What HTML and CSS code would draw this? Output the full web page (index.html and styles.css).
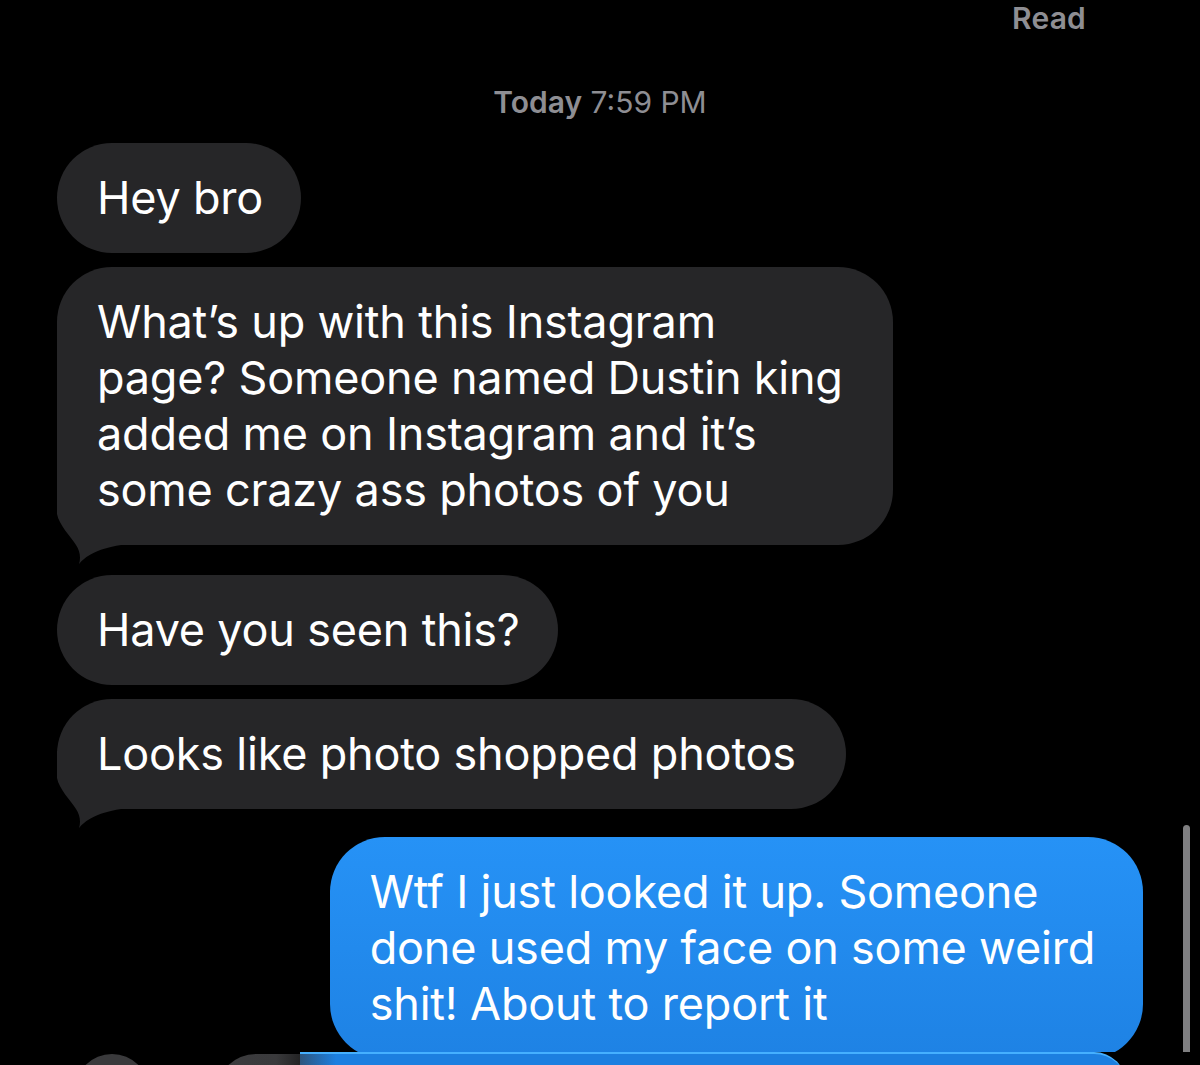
FILE: index.html
```html
<!DOCTYPE html>
<html>
<head>
<meta charset="utf-8">
<link rel="stylesheet" href="styles.css">
</head>
<body>
<div class="screen">
  <div class="read">Read</div>
  <div class="stamp"><span class="day">Today</span> 7:59 PM</div>
  <div class="thread">
    <div class="msg in">Hey bro</div>
    <div class="msg in tail">
      <svg class="tail-l" width="64" height="80" viewBox="0 -58 64 80"><path d="M0,-58 L0,-31 C2,-20 14,-8 19,0 C23,6 24,13 22,19 C28,12 38,4 64,0 L64,-58 Z"/></svg>
      <span class="txt">What’s up with this Instagram<br>page? Someone named Dustin king<br>added me on Instagram and it’s<br>some crazy ass photos of you</span>
    </div>
    <div class="msg in">Have you seen this?</div>
    <div class="msg in tail">
      <svg class="tail-l" width="64" height="80" viewBox="0 -58 64 80"><path d="M0,-58 L0,-31 C2,-20 14,-8 19,0 C23,6 24,13 22,19 C28,12 38,4 64,0 L64,-58 Z"/></svg>
      <span class="txt">Looks like photo shopped photos</span>
    </div>
    <div class="msg out wide">Wtf I just looked it up. Someone<br>done used my face on some weird<br>shit! About to report it</div>
  </div>
  <div class="scrollbar"></div>
  <div class="inputbar">
    <div class="blueband"></div>
    <div class="circle"></div>
    <div class="field"></div>
  </div>
</div>
</body>
</html>
```

FILE: styles.css
```css
html, body {
  margin: 0;
  padding: 0;
  background: #000;
}
.screen {
  position: relative;
  width: 1200px;
  height: 1065px;
  overflow: hidden;
  background: #000;
  font-family: Inter, "Noto Sans", sans-serif;
  color: #fff;
}
.read {
  text-align: right;
  padding-right: 114px;
  font-size: 30px;
  font-weight: 600;
  line-height: 36px;
  color: #8e8e93;
  letter-spacing: 0.2px;
}
.stamp {
  text-align: center;
  font-size: 30px;
  line-height: 32px;
  margin-top: 50px;
  color: #8e8e93;
}
.stamp .day {
  font-weight: 600;
}
.thread {
  display: flex;
  flex-direction: column;
  align-items: flex-start;
  gap: 14px;
  padding: 0 57px;
  margin-top: 25px;
}
.msg {
  position: relative;
  font-size: 45px;
  line-height: 56px;
  letter-spacing: -0.2px;
  padding: 27px 38px 27px 40px;
  border-radius: 55px;
}
.msg.in {
  background: #262628;
}
.msg.tail {
  padding-right: 50px;
  margin-bottom: 16px;
}
.msg .txt {
  position: relative;
}
.msg.wide {
  padding-right: 48px;
}
.msg.out {
  align-self: flex-end;
  background: linear-gradient(#2692f6, #1e82e4);
  margin-top: -2px;
}
.tail-l {
  position: absolute;
  left: 0;
  bottom: -22px;
  fill: #262628;
}
.scrollbar {
  position: absolute;
  left: 1183px;
  top: 825px;
  width: 7px;
  height: 260px;
  border-radius: 4px;
  background: #7f7f81;
}
.inputbar {
  position: absolute;
  left: 0;
  top: 1052px;
  width: 1200px;
  height: 20px;
  background: #000;
}
.blueband {
  position: absolute;
  left: 300px;
  top: 0;
  width: 826px;
  height: 30px;
  border-top: 2px solid #45b0ff;
  border-top-right-radius: 40px;
  background: #1c7fe0;
}
.circle {
  position: absolute;
  left: 75px;
  top: 2px;
  width: 74px;
  height: 74px;
  border-radius: 50%;
  background: #3a3a3c;
}
.field {
  position: absolute;
  left: 216px;
  top: 2px;
  width: 300px;
  height: 60px;
  border-top-left-radius: 40px;
  background: linear-gradient(to right, #3c3c3e 0, #3a3a3c 60px, rgba(58,58,60,0) 120px);
}
```
